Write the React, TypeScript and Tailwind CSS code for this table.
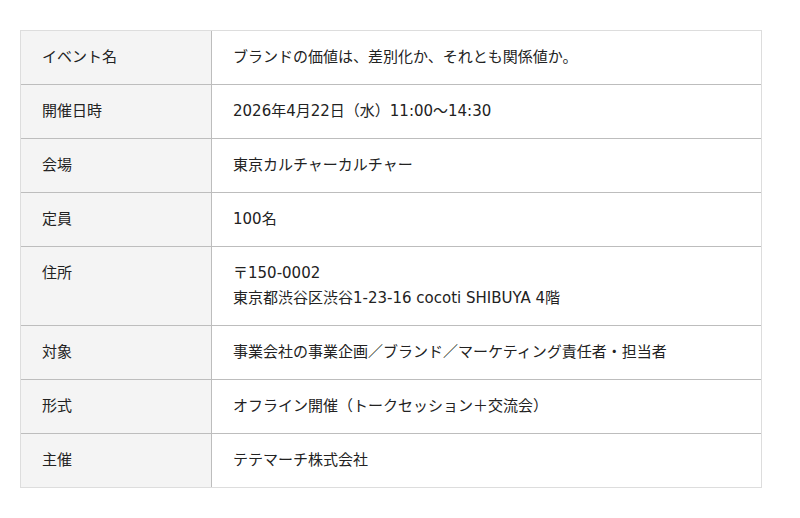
const rows: { label: string; value: string[] }[] = [
  { label: "イベント名", value: ["ブランドの価値は、差別化か、それとも関係値か。"] },
  { label: "開催日時", value: ["2026年4月22日（水）11:00〜14:30"] },
  { label: "会場", value: ["東京カルチャーカルチャー"] },
  { label: "定員", value: ["100名"] },
  { label: "住所", value: ["〒150-0002", "東京都渋谷区渋谷1-23-16 cocoti SHIBUYA 4階"] },
  { label: "対象", value: ["事業会社の事業企画／ブランド／マーケティング責任者・担当者"] },
  { label: "形式", value: ["オフライン開催（トークセッション＋交流会）"] },
  { label: "主催", value: ["テテマーチ株式会社"] },
];

export default function App() {
  return (
    <div className="bg-white w-[800px] h-[518px] px-[20px] pt-[30px] font-['DejaVu_Sans','Noto_Sans_CJK_JP',sans-serif] text-[15px] text-[#222]">
      <div className="w-[742px] border border-[#dddddd]">
        {rows.map((row, i) => (
          <div
            key={row.label}
            className={`flex ${i < rows.length - 1 ? "border-b border-[#bdbdbd]" : ""}`}
          >
            <div className="w-[191px] shrink-0 bg-[#f4f4f4] border-r border-[#bdbdbd] px-[21px] py-[14px] leading-[25px]">
              {row.label}
            </div>
            <div className="flex-1 px-[21px] py-[14px] leading-[25px]">
              {row.value.map(line => (
                <div key={line}>{line}</div>
              ))}
            </div>
          </div>
        ))}
      </div>
    </div>
  );
}
